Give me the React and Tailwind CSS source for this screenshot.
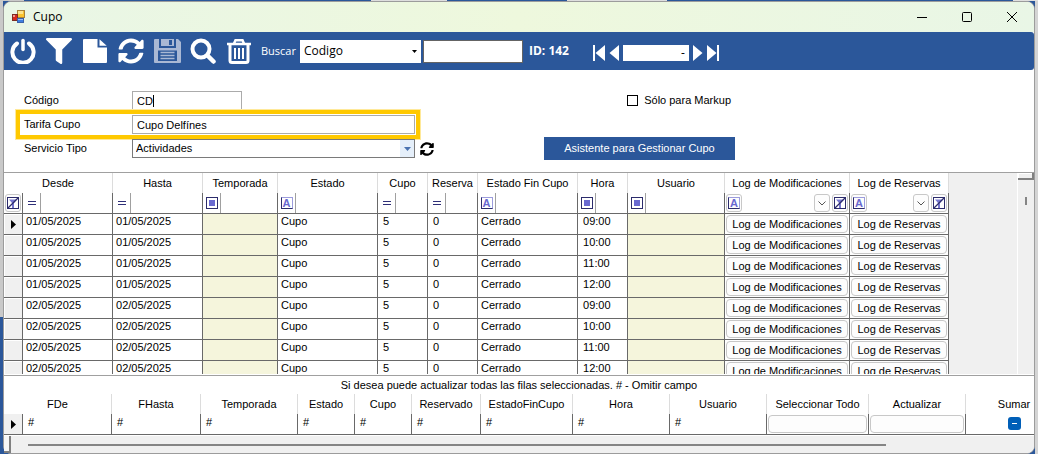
import { FaFilter, FaSyncAlt } from "react-icons/fa";

const LOG_M = "Log de Modificaciones";
const LOG_R = "Log de Reservas";

const columns = [
  { name: "Desde", width: 90, filter: "eq" },
  { name: "Hasta", width: 90, filter: "eq" },
  { name: "Temporada", width: 75, filter: "box" },
  { name: "Estado", width: 100, filter: "text" },
  { name: "Cupo", width: 50, filter: "eq" },
  { name: "Reserva", width: 50, filter: "eq" },
  { name: "Estado Fin Cupo", width: 100, filter: "text" },
  { name: "Hora", width: 50, filter: "box" },
  { name: "Usuario", width: 97, filter: "box" },
  { name: LOG_M, width: 125, filter: "combo" },
  { name: LOG_R, width: 99, filter: "combo" },
];

const rows = [
  ["01/05/2025", "09:00"],
  ["01/05/2025", "10:00"],
  ["01/05/2025", "11:00"],
  ["01/05/2025", "12:00"],
  ["02/05/2025", "09:00"],
  ["02/05/2025", "10:00"],
  ["02/05/2025", "11:00"],
  ["02/05/2025", "12:00"],
];

const bulkColumns = [
  ["FDe", 89],
  ["FHasta", 89],
  ["Temporada", 97],
  ["Estado", 57],
  ["Cupo", 57],
  ["Reservado", 69],
  ["EstadoFinCupo", 92],
  ["Hora", 97],
  ["Usuario", 97],
  ["Seleccionar Todo", 102],
  ["Actualizar", 97],
  ["Sumar", 97],
];

const cell = "border-r border-b border-[#696969] p-0";
const headCell = "border-r border-[#dcdcdc] p-0 text-center font-normal whitespace-nowrap overflow-hidden";
const gridButton =
  "block w-full rounded border border-[#c8c8c8] bg-[#fdfdfd] text-center whitespace-nowrap overflow-hidden";

function AppIcon() {
  return (
    <svg className="h-[14px] w-[13px]" viewBox="0 0 13 14" aria-hidden="true">
      <rect x="5.500" y="0.500" width="7" height="7" fill="#fbc42d" stroke="#a8823a" />
      <rect x="6" y="1" width="5" height="3" fill="#fde48c" />
      <rect x="0.500" y="4.500" width="5" height="6" fill="#d5281e" stroke="#7e2a24" />
      <rect x="1" y="5" width="2" height="2" fill="#f09a90" />
      <rect x="5.500" y="8.500" width="6" height="4" fill="#3e7ee0" stroke="#3b62a8" />
      <rect x="6" y="9" width="5" height="1" fill="#9cc2f8" />
    </svg>
  );
}

function PowerIcon() {
  return (
    <svg className="size-[26px]" viewBox="0 0 26 26" fill="none" stroke="currentColor" aria-hidden="true">
      <path strokeWidth="3.500" strokeLinecap="round" d="M13 2.500v9" />
      <path strokeWidth="4" strokeLinecap="round" d="M7 5.500a10.600 10.600 0 1 0 12 0" />
    </svg>
  );
}

function FileIcon() {
  return (
    <svg className="size-6" viewBox="0 0 24 24" fill="currentColor" aria-hidden="true">
      <path d="M1 0h13.500v8.500H24V23a1 1 0 0 1-1 1H1a1 1 0 0 1-1-1V1a1 1 0 0 1 1-1z" />
      <path d="M16.500 0.300L23.700 6.800H16.500z" />
    </svg>
  );
}

function SaveIcon() {
  return (
    <svg className="h-6 w-[27px]" viewBox="0 0 27 24" fill="none" preserveAspectRatio="none" aria-hidden="true">
      <path
        fillRule="evenodd"
        fill="#a9b8d4"
        d="M1 0h4v9h17V0h2l3 3v20a1 1 0 0 1-1 1H1a1 1 0 0 1-1-1V1a1 1 0 0 1 1-1zM4 11.500V22h19V11.500z"
      />
      <path fill="#a9b8d4" d="M7 0h13v7H7z" />
      <path fill="#2b579a" d="M15 1h3v5h-3z" />
      <path stroke="#a9b8d4" strokeWidth="1.500" d="M6.500 13.500h14M6.500 16.500h14M6.500 19.500h14" />
    </svg>
  );
}

function SearchIcon() {
  return (
    <svg className="size-[26px]" viewBox="0 0 26 26" fill="none" stroke="currentColor" aria-hidden="true">
      <circle cx="11" cy="11" r="8.500" strokeWidth="4" />
      <path strokeWidth="4.500" strokeLinecap="round" d="M17.500 17.500L23.500 23.500" />
    </svg>
  );
}

function TrashIcon() {
  return (
    <svg className="size-[26px]" viewBox="0 0 26 26" fill="none" stroke="currentColor" aria-hidden="true">
      <path strokeWidth="2.500" d="M1 6h24M8 5.500L9.500 2.200h7L18 5.500" />
      <path strokeWidth="3" strokeLinejoin="round" d="M4 6v16.500a2 2 0 0 0 2 2h14a2 2 0 0 0 2-2V6" />
      <path strokeWidth="2" d="M9 10v11M13 10v11M17 10v11" />
    </svg>
  );
}

function NavIcon({ bar, flip }) {
  return (
    <svg
      className={flip ? "h-4 w-[13px] -scale-x-100" : "h-4 w-[13px]"}
      viewBox="0 0 13 16"
      fill="currentColor"
      aria-hidden="true"
    >
      {bar && <rect x="0" y="0" width="2" height="16" />}
      <path d={bar ? "M12 0v16L2.500 8z" : "M11 0v16L1.500 8z"} />
    </svg>
  );
}

function RecordArrow() {
  return (
    <svg className="ml-[7px] h-[9px] w-[5px]" viewBox="0 0 5 9" aria-hidden="true">
      <path d="M0 0L5 4.500L0 9z" />
    </svg>
  );
}

function ClearFilterIcon() {
  return (
    <svg className="size-3" viewBox="0 0 12 12" fill="none" aria-hidden="true">
      <rect x="0.500" y="0.500" width="11" height="11" fill="#fff" stroke="#2c2c6c" />
      <path d="M2 2.500h8L7 6v5H5V6z" fill="#7676d0" />
      <path d="M1 11L11 1" stroke="#2c2c6c" strokeWidth="1.300" />
    </svg>
  );
}

function Chevron() {
  return (
    <svg className="h-[5px] w-2" viewBox="0 0 8 5" fill="none" stroke="#555" aria-hidden="true">
      <path d="M0.500 0.500L4 4L7.500 0.500" />
    </svg>
  );
}

function OperatorIcon({ kind }) {
  if (kind === "eq") {
    return (
      <svg className="h-1 w-2" viewBox="0 0 8 4" aria-hidden="true">
        <path d="M0 0h8v1H0zM0 3h8v1H0z" fill="#2f2f78" />
      </svg>
    );
  }
  if (kind === "box") {
    return (
      <svg className="size-3" viewBox="0 0 12 12" aria-hidden="true">
        <rect x="0.500" y="0.500" width="11" height="11" fill="#fff" stroke="#2c2c6c" />
        <rect x="3" y="3" width="6" height="6" fill="#6868d0" />
      </svg>
    );
  }
  return (
    <span className="flex size-3 items-center justify-center border border-t-[#9c9cdc] border-r-[#9c9cdc] border-b-[#2c2c6c] border-l-[#2c2c6c] text-[11px] leading-none font-bold text-[#6868d0]">
      A
    </span>
  );
}

const smallButton =
  "flex h-[18px] w-4 flex-none items-center justify-center rounded-[3px] border border-[#c8c8c8] bg-[#fdfdfd]";

function FilterCell({ column }) {
  if (column.filter === "combo") {
    return (
      <div className="flex h-5 items-center gap-0.5 px-px">
        <button className={smallButton} aria-label={"Operador " + column.name}>
          <OperatorIcon kind="text" />
        </button>
        <input className="h-4 w-0 flex-1 outline-none" aria-label={"Filtro " + column.name} />
        <button className={smallButton} aria-label={"Valores " + column.name}>
          <Chevron />
        </button>
        <button className={smallButton} aria-label={"Quitar filtro " + column.name}>
          <ClearFilterIcon />
        </button>
      </div>
    );
  }
  return (
    <div className="flex h-5 items-center">
      <button
        className="flex h-5 w-[18px] flex-none items-center justify-center border-r border-[#a0a0a0]"
        aria-label={"Operador " + column.name}
      >
        <OperatorIcon kind={column.filter} />
      </button>
      <input className="h-5 w-0 flex-1 px-0.5 outline-none" aria-label={"Filtro " + column.name} />
    </div>
  );
}

function TitleBar() {
  const control = "flex h-full w-[45px] items-center justify-center";
  return (
    <header className="flex h-[30px] items-center rounded-t-[7px] bg-linear-to-r from-[#e9f6e6] via-[#eef8dd] to-[#e9f6e6] pl-2">
      <AppIcon />
      <h1 className="ml-2 flex-1 font-['Open_Sans',sans-serif] text-xs">Cupo</h1>
      <button className={control} aria-label="Minimizar">
        <svg className="size-2.5" viewBox="0 0 10 10" stroke="#000" aria-hidden="true">
          <path d="M0 5.500h10" />
        </svg>
      </button>
      <button className={control} aria-label="Maximizar">
        <svg className="size-2.5" viewBox="0 0 10 10" fill="none" stroke="#000" aria-hidden="true">
          <rect x="0.500" y="0.500" width="9" height="9" rx="1" />
        </svg>
      </button>
      <button className={control} aria-label="Cerrar">
        <svg className="size-2.5" viewBox="0 0 10 10" fill="none" stroke="#000" aria-hidden="true">
          <path d="M0 0L10 10M10 0L0 10" />
        </svg>
      </button>
    </header>
  );
}

function Toolbar() {
  const tool = "flex h-8 w-9 flex-none items-center justify-center";
  return (
    <div className="flex h-[38px] items-center rounded-r-[3px] bg-[#2b579a] pl-px font-['Open_Sans',sans-serif] text-white">
      <button className={tool} aria-label="Salir"><PowerIcon /></button>
      <button className={tool} aria-label="Filtrar"><FaFilter className="size-[26px]" /></button>
      <button className={tool} aria-label="Nuevo"><FileIcon /></button>
      <button className={tool} aria-label="Actualizar"><FaSyncAlt className="size-[26px]" /></button>
      <button className={tool} aria-label="Guardar" disabled><SaveIcon /></button>
      <button className={tool} aria-label="Buscar"><SearchIcon /></button>
      <button className={tool} aria-label="Eliminar"><TrashIcon /></button>
      <label className="ml-1 text-[11px]" htmlFor="buscar">Buscar</label>
      <div className="relative ml-1 flex h-[23px] w-[121px] flex-none items-center bg-white">
        <select id="buscar" className="h-full w-full appearance-none bg-transparent pl-1 text-xs text-black outline-none">
          <option>Codigo</option>
        </select>
        <svg className="pointer-events-none absolute right-1 h-[3px] w-[5px]" viewBox="0 0 5 3" aria-hidden="true">
          <path d="M0 0h5L2.500 3z" />
        </svg>
      </div>
      <input
        className="ml-0.5 h-[23px] w-[100px] flex-none border border-[#646464] bg-white px-1 text-xs text-black outline-none"
        aria-label="Texto a buscar"
      />
      <span className="ml-1.5 w-16 flex-none text-xs font-bold">ID: 142</span>
      <div className="flex items-center gap-0.5 pt-1">
        <button aria-label="Primero"><NavIcon bar /></button>
        <button aria-label="Anterior"><NavIcon /></button>
        <input
          className="h-4 w-[66px] bg-white px-1 text-right text-xs text-black outline-none"
          aria-label="Registro"
          defaultValue="-"
        />
        <button aria-label="Siguiente"><NavIcon flip /></button>
        <button aria-label="Último"><NavIcon bar flip /></button>
      </div>
    </div>
  );
}

function Form() {
  const label = "w-[108px] flex-none";
  return (
    <form className="flex pt-[21px] pb-3 pl-5" onSubmit={(e) => e.preventDefault()}>
      <div className="flex w-[520px] flex-none flex-col gap-[5px]">
        <div className="flex h-[19px] items-center">
          <label className={label} htmlFor="codigo">Código</label>
          <div className="relative h-full w-[110px]">
            <input id="codigo" className="h-full w-full border border-[#ababab] px-1 outline-none" defaultValue="CD" />
            <span className="absolute top-1 left-[21px] h-3 w-px bg-black" />
          </div>
        </div>
        <div className="relative flex h-[19px] w-[391px] items-center">
          <label className={label} htmlFor="tarifa">Tarifa Cupo</label>
          <input id="tarifa" className="h-full w-[283px] border border-[#ababab] px-1 outline-none" defaultValue="Cupo Delfínes" />
          <div className="pointer-events-none absolute -inset-y-[5px] -right-[5px] -left-2 border-4 border-[#ffc900] ring-1 ring-[#ffe999]" />
        </div>
        <div className="flex h-[19px] items-center">
          <label className={label} htmlFor="servicio">Servicio Tipo</label>
          <div className="relative flex h-full w-[283px] items-center border border-[#7a7a7a]">
            <select id="servicio" className="h-full w-full appearance-none px-[3px] outline-none">
              <option>Actividades</option>
            </select>
            <span className="pointer-events-none absolute right-0 flex h-full w-3.5 items-center justify-center bg-[#e5effa]">
              <svg className="h-1 w-[7px]" viewBox="0 0 7 4" aria-hidden="true">
                <path d="M0 0h7L3.500 4z" fill="#4a72b0" />
              </svg>
            </span>
          </div>
          <button className="ml-[5px]" aria-label="Recargar servicios"><FaSyncAlt className="size-3.5" /></button>
        </div>
      </div>
      <div className="flex flex-col items-center gap-[27px]">
        <label className="flex h-[19px] items-center self-end pr-1">
          <input type="checkbox" className="mr-1.5 size-[11px] appearance-none border border-black bg-white" />
          Sólo para Markup
        </label>
        <button className="h-[23px] w-[191px] bg-[#2b579a] text-white">Asistente para Gestionar Cupo</button>
      </div>
    </form>
  );
}

function QuotaGrid() {
  return (
    <div className="mb-px flex h-[202px] overflow-hidden border-t border-[#a0a0a0] bg-[#f0f0f0]">
      <table className="w-[945px] flex-none table-fixed border-separate border-spacing-0 self-start bg-white">
        <colgroup>
          <col className="w-[19px]" />
          {columns.map((c) => (
            <col key={c.name} style={{ width: c.width }} />
          ))}
        </colgroup>
        <thead>
          <tr className="h-5">
            {columns.map((c, i) => (
              <th key={c.name} scope="col" colSpan={i === 0 ? 2 : 1} className={headCell}>{c.name}</th>
            ))}
          </tr>
          <tr className="h-[21px]">
            <td className={cell}>
              <button className={smallButton + " ml-px"} aria-label="Quitar filtros"><ClearFilterIcon /></button>
            </td>
            {columns.map((c) => (
              <td key={c.name} className={cell}><FilterCell column={c} /></td>
            ))}
          </tr>
        </thead>
        <tbody>
          {rows.map(([date, hour], i) => (
            <tr key={i} className="h-[21px] align-top leading-[15px]">
              <th className={cell + " bg-[#f0f0f0] align-middle shadow-[inset_1px_1px_#ffffff]"}>
                {i === 0 && <RecordArrow />}
              </th>
              <td className={cell + " pl-[3px]"}>{date}</td>
              <td className={cell + " pl-[3px]"}>{date}</td>
              <td className={cell + " bg-[#f5f5dc]"} />
              <td className={cell + " pl-[3px]"}>Cupo</td>
              <td className={cell + " pl-[5px]"}>5</td>
              <td className={cell + " pl-[5px]"}>0</td>
              <td className={cell + " pl-[3px]"}>Cerrado</td>
              <td className={cell + " pl-[5px]"}>{hour}</td>
              <td className={cell + " bg-[#f5f5dc]"} />
              <td className={cell + " p-px"}><button className={gridButton + " h-[18px]"}>{LOG_M}</button></td>
              <td className={cell + " p-px"}><button className={gridButton + " h-[18px]"}>{LOG_R}</button></td>
            </tr>
          ))}
        </tbody>
      </table>
      <div className="ml-auto flex w-[17px] flex-col items-center border-l border-white">
        <div className="h-[7px] w-full border-r-2 border-b-2 border-[#808080] bg-[#f0f0f0] shadow-[inset_1px_1px_#ffffff]" />
        <div className="mt-[17px] h-2 w-0.5 bg-[#858585]" />
      </div>
    </div>
  );
}

function BulkGrid() {
  return (
    <div className="overflow-hidden border-t border-[#a0a0a0]">
      <p className="h-[18px] text-center leading-[18px]">
        Si desea puede actualizar todas las filas seleccionadas. # - Omitir campo
      </p>
      <table className="w-[1059px] table-fixed border-separate border-spacing-0">
        <colgroup>
          <col className="w-[19px]" />
          {bulkColumns.map(([name, width]) => (
            <col key={name} style={{ width }} />
          ))}
        </colgroup>
        <thead>
          <tr className="h-5">
            {bulkColumns.map(([name], i) => (
              <th key={name} scope="col" colSpan={i === 0 ? 2 : 1} className={headCell}>{name}</th>
            ))}
          </tr>
        </thead>
        <tbody>
          <tr className="h-[21px] align-top leading-[17px]">
            <th className={cell + " bg-[#f0f0f0] align-middle"}><RecordArrow /></th>
            {bulkColumns.slice(0, 9).map(([name]) => (
              <td key={name} className={cell + " pl-[5px]"}>#</td>
            ))}
            <td className={cell + " p-px"}><button className={gridButton + " h-[18px]"} aria-label="Seleccionar Todo" /></td>
            <td className={cell + " p-px"}><button className={gridButton + " h-[18px]"} aria-label="Actualizar" /></td>
            <td className={cell}>
              <label className="relative mx-auto mt-[3px] flex size-[13px] items-center justify-center">
                <input type="checkbox" className="absolute inset-0 appearance-none rounded-[3px] bg-[#005fb8]" aria-label="Sumar" />
                <span className="relative h-px w-[5px] bg-white" />
              </label>
            </td>
          </tr>
        </tbody>
      </table>
      <div className="mt-px flex h-[17px] items-center rounded-b-[7px] bg-[#f0f0f0]">
        <div className="h-full w-[7px] border-r-2 border-b-2 border-[#808080] bg-[#f6f6f6]" />
        <div className="ml-[17px] h-0.5 w-5/6 bg-[#858585]" />
      </div>
    </div>
  );
}

export default function App() {
  return (
    <div className="flex min-h-screen flex-col overflow-hidden bg-[#2b579a] font-['Liberation_Sans',sans-serif] text-[11px] text-black">
      <div className="flex h-px">
        <div className="w-6 bg-[#c9c9c9]" />
        <div className="flex-1" />
        <div className="w-[76px] bg-[#dedede]" />
        <div className="w-[120px]" />
        <div className="w-[100px] bg-[#dedede]" />
        <div className="flex-1" />
        <div className="w-[25px] bg-[#e0e0e0]" />
      </div>
      <div className="flex flex-1">
        <div className="w-[3px] flex-none">
          <div className="h-[316px] bg-[#c9c9c9]" />
        </div>
        <main className="min-w-0 flex-1 rounded-lg border border-[#9c9c9c] bg-white">
          <TitleBar />
          <Toolbar />
          <Form />
          <QuotaGrid />
          <BulkGrid />
        </main>
        <div className="w-[3px] flex-none bg-[#d4d4d4]" />
      </div>
    </div>
  );
}
